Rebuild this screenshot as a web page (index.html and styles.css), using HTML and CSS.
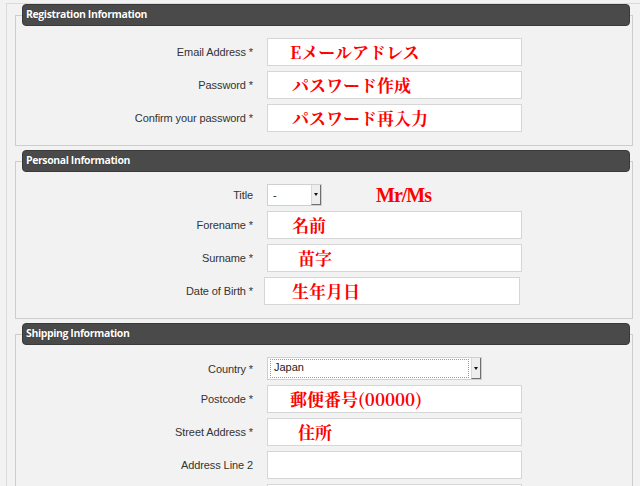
FILE: index.html
```html
<!DOCTYPE html>
<html lang="en">
<head>
<meta charset="utf-8">
<title>Registration</title>
<link rel="stylesheet" href="styles.css">
</head>
<body>
<div class="page">
  <fieldset class="section">
    <legend class="section-head">Registration Information</legend>
    <div class="rows">
      <div class="row"><label class="lbl">Email Address *</label><div class="field indent-s">Eメールアドレス</div></div>
      <div class="row"><label class="lbl">Password *</label><div class="field indent-m">パスワード作成</div></div>
      <div class="row"><label class="lbl">Confirm your password *</label><div class="field indent-m">パスワード再入力</div></div>
    </div>
  </fieldset>

  <fieldset class="section">
    <legend class="section-head">Personal Information</legend>
    <div class="rows">
      <div class="row">
        <label class="lbl">Title</label>
        <div class="title-wrap">
          <div class="select select-title"><span class="val">-</span><span class="btn"><i class="tri"></i></span></div>
          <span class="note">Mr/Ms</span>
        </div>
      </div>
      <div class="row"><label class="lbl">Forename *</label><div class="field indent-m">名前</div></div>
      <div class="row"><label class="lbl">Surname *</label><div class="field indent-l">苗字</div></div>
      <div class="row"><label class="lbl">Date of Birth *</label><div class="field field-dob">生年月日</div></div>
    </div>
  </fieldset>

  <fieldset class="section">
    <legend class="section-head">Shipping Information</legend>
    <div class="rows">
      <div class="row">
        <label class="lbl">Country *</label>
        <div class="select select-country"><span class="val val-focus">Japan</span><span class="btn"><i class="tri"></i></span></div>
      </div>
      <div class="row"><label class="lbl">Postcode *</label><div class="field indent-s">郵便番号(00000)</div></div>
      <div class="row"><label class="lbl">Street Address *</label><div class="field indent-l">住所</div></div>
      <div class="row"><label class="lbl">Address Line 2</label><div class="field"></div></div>
      <div class="row"><span class="lbl"></span><div class="field"></div></div>
    </div>
  </fieldset>
</div>
</body>
</html>
```

FILE: styles.css
```css
html, body {
  margin: 0;
  padding: 0;
  background: #f2f2f2;
  font-family: "Liberation Sans", Arial, sans-serif;
  overflow: hidden;
}

.page {
  margin: 3px 0 0 6px;
  border-top: 1px solid #dadada;
  border-left: 1px solid #dadada;
  padding-left: 8px;
}

.section {
  box-sizing: border-box;
  width: 618px;
  margin: 0 0 4px 0;
  border: 1px solid #cdcdcd;
  padding: 12px 13px 13px 6px;
  min-width: 0;
}

.section-head {
  box-sizing: border-box;
  width: 608px;
  height: 22px;
  padding: 0 0 0 3px;
  background: #4a4a4a;
  border: 1px solid #3a3a3a;
  border-radius: 4px;
  color: #fff;
  font-family: "Open Sans", "Liberation Sans", sans-serif;
  font-weight: 700;
  font-size: 10.5px;
  letter-spacing: -0.4px;
  line-height: 19px;
  text-shadow: 0 0 1px rgba(0,0,0,0.6);
}

.rows {
  display: flex;
  flex-direction: column;
  gap: 5px;
}

.row {
  display: grid;
  grid-template-columns: 231px 255px;
  column-gap: 14px;
  align-items: center;
}

.lbl {
  text-align: right;
  font-size: 11px;
  letter-spacing: -0.1px;
  color: #333;
  white-space: nowrap;
}

.field {
  box-sizing: border-box;
  height: 28px;
  border: 1px solid #d6d6d6;
  background: #fff;
  color: #f00;
  font-family: "Noto Serif CJK JP", "Noto Sans CJK JP", serif;
  font-weight: 700;
  font-size: 17px;
  line-height: 26px;
  white-space: nowrap;
  overflow: hidden;
}

.indent-s { padding-left: 22px; }
.indent-m { padding-left: 24px; }
.indent-l { padding-left: 30px; }

.field-dob {
  margin-left: -3px;
  width: 256px;
  padding-left: 27px;
}

.title-wrap {
  display: flex;
  align-items: center;
  gap: 54px;
}

.note {
  color: #f00;
  font-family: "Liberation Serif", "Times New Roman", serif;
  font-weight: 700;
  font-size: 20px;
  letter-spacing: -1px;
  line-height: 22px;
}

.select {
  box-sizing: border-box;
  display: flex;
  background: #fff;
  border: 1px solid #cfcfcf;
  font-size: 11px;
  color: #222;
}

.select-title {
  width: 55px;
  height: 22px;
}

.select-country {
  width: 215px;
  height: 23px;
}

.val {
  flex: 1;
  padding-left: 5px;
  line-height: 20px;
}

.val-focus {
  margin: 1px 2px 1px 2px;
  padding-left: 3px;
  border: 1px dotted #9a9a9a;
  line-height: 15px;
}

.btn {
  box-sizing: border-box;
  width: 10px;
  display: flex;
  align-items: center;
  justify-content: center;
  background: #eeeeee;
  border-left: 1px solid #d8d8d8;
  border-right: 1px solid #6f6f6f;
  border-bottom: 1px solid #6f6f6f;
}

.tri {
  display: block;
  width: 0;
  height: 0;
  border-top: 3px solid #111;
  border-left: 2px solid transparent;
  border-right: 2px solid transparent;
}
```
